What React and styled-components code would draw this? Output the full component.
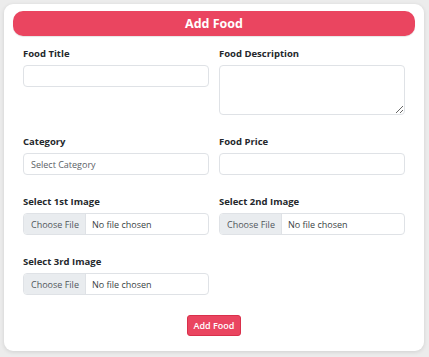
import React from 'react';
import styled, { createGlobalStyle } from 'styled-components';

const GlobalStyle = createGlobalStyle`
  html, body {
    margin: 0;
    padding: 0;
    background: #ececec;
    font-family: 'Open Sans', 'Noto Sans', sans-serif;
  }
  * {
    box-sizing: border-box;
  }
`;

const Page = styled.div`
  padding: 4px 5px 6px 4px;
`;

const Card = styled.form`
  background: #ffffff;
  border-radius: 9px;
  box-shadow: 0 1px 4px rgba(0, 0, 0, 0.12);
  padding: 7px 9px 15px 9px;
  display: flex;
  flex-direction: column;
`;

const Header = styled.h2`
  margin: 0;
  height: 25px;
  border-radius: 10px;
  background: #ea4560;
  color: #ffffff;
  font-size: 12.5px;
  font-weight: 700;
  display: flex;
  align-items: center;
  justify-content: center;
  box-shadow: 0 1px 1px rgba(0, 0, 0, 0.1);
`;

const Grid = styled.div`
  display: grid;
  grid-template-columns: 1fr 1fr;
  column-gap: 10px;
  row-gap: 20px;
  padding: 11px 10px 0 10px;
  align-items: start;
`;

const Field = styled.div`
  display: flex;
  flex-direction: column;
  gap: 4px;
`;

const Label = styled.label`
  font-size: 9.5px;
  font-weight: 700;
  line-height: 14px;
  color: #24282c;
`;

const TextInput = styled.input`
  height: 22px;
  border: 1px solid #dfe2e6;
  border-radius: 4px;
  padding: 0 7px;
  font-family: inherit;
  font-size: 9px;
  color: #5b6166;
  background: #fff;
  outline: none;

  &::placeholder {
    color: #5b6166;
  }
`;

const TextArea = styled.textarea`
  height: 50px;
  border: 1px solid #dfe2e6;
  border-radius: 4px;
  padding: 4px 7px;
  font-family: inherit;
  font-size: 9px;
  resize: vertical;
  outline: none;
`;

const FileInput = styled.input`
  height: 22px;
  border: 1px solid #dfe2e6;
  border-radius: 4px;
  padding: 0 7px 0 0;
  font-family: inherit;
  font-size: 9px;
  color: #3a3f44;
  background: #fff;
  overflow: hidden;
  line-height: 20px;

  &::file-selector-button {
    height: 20px;
    margin: 0 6px 0 0;
    padding: 0 6px 0 7px;
    border: none;
    border-right: 1px solid #dfe2e6;
    background: #e9ecef;
    color: #51575c;
    font-family: inherit;
    font-size: 9px;
  }
`;

const Actions = styled.div`
  display: flex;
  justify-content: center;
  padding-top: 20px;
`;

const SubmitButton = styled.button`
  height: 21px;
  padding: 0 6px;
  border: 1px solid #d9304b;
  border-radius: 3px;
  background: #ea4560;
  color: #fff;
  font-family: inherit;
  font-size: 9px;
  font-weight: 600;
  cursor: pointer;
`;

export default function App() {
  return (
    <Page>
      <GlobalStyle />
      <Card onSubmit={(e) => e.preventDefault()}>
        <Header>Add Food</Header>
        <Grid>
          <Field>
            <Label>Food Title</Label>
            <TextInput type="text" />
          </Field>
          <Field>
            <Label>Food Description</Label>
            <TextArea />
          </Field>
          <Field>
            <Label>Category</Label>
            <TextInput type="text" placeholder="Select Category" />
          </Field>
          <Field>
            <Label>Food Price</Label>
            <TextInput type="text" />
          </Field>
          <Field>
            <Label>Select 1st Image</Label>
            <FileInput type="file" />
          </Field>
          <Field>
            <Label>Select 2nd Image</Label>
            <FileInput type="file" />
          </Field>
          <Field>
            <Label>Select 3rd Image</Label>
            <FileInput type="file" />
          </Field>
        </Grid>
        <Actions>
          <SubmitButton type="submit">Add Food</SubmitButton>
        </Actions>
      </Card>
    </Page>
  );
}
